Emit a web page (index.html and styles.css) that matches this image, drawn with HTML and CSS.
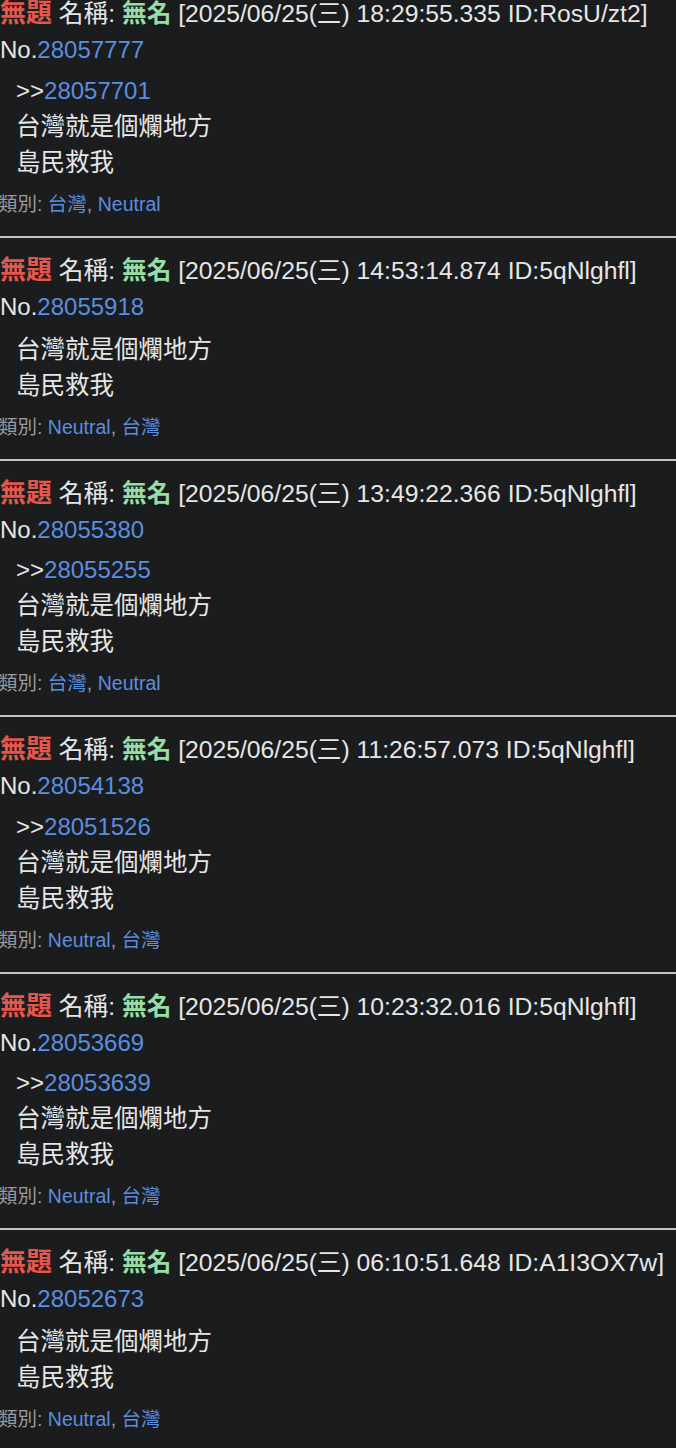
FILE: index.html
```html
<!DOCTYPE html>
<html lang="zh-Hant">
<head>
<meta charset="utf-8">
<link rel="stylesheet" href="styles.css">
</head>
<body>
<div class="thread">
  <div class="post">
    <div class="head"><span class="title">無題</span> 名稱: <span class="name">無名</span> [2025/06/25(三) 18:29:55.335 ID:RosU/zt2]</div>
    <div class="no">No.<a class="link">28057777</a></div>
    <div class="body">
      <div class="quote">&gt;&gt;<a class="link">28057701</a></div>
      <div class="line">台灣就是個爛地方</div>
      <div class="line">島民救我</div>
    </div>
    <div class="cat">類別: <a class="link">台灣</a>, <a class="link">Neutral</a></div>
  </div>
  <div class="post">
    <div class="head"><span class="title">無題</span> 名稱: <span class="name">無名</span> [2025/06/25(三) 14:53:14.874 ID:5qNlghfl]</div>
    <div class="no">No.<a class="link">28055918</a></div>
    <div class="body noquote">
      <div class="line">台灣就是個爛地方</div>
      <div class="line">島民救我</div>
    </div>
    <div class="cat">類別: <a class="link">Neutral</a>, <a class="link">台灣</a></div>
  </div>
  <div class="post">
    <div class="head"><span class="title">無題</span> 名稱: <span class="name">無名</span> [2025/06/25(三) 13:49:22.366 ID:5qNlghfl]</div>
    <div class="no">No.<a class="link">28055380</a></div>
    <div class="body">
      <div class="quote">&gt;&gt;<a class="link">28055255</a></div>
      <div class="line">台灣就是個爛地方</div>
      <div class="line">島民救我</div>
    </div>
    <div class="cat">類別: <a class="link">台灣</a>, <a class="link">Neutral</a></div>
  </div>
  <div class="post">
    <div class="head"><span class="title">無題</span> 名稱: <span class="name">無名</span> [2025/06/25(三) 11:26:57.073 ID:5qNlghfl]</div>
    <div class="no">No.<a class="link">28054138</a></div>
    <div class="body">
      <div class="quote">&gt;&gt;<a class="link">28051526</a></div>
      <div class="line">台灣就是個爛地方</div>
      <div class="line">島民救我</div>
    </div>
    <div class="cat">類別: <a class="link">Neutral</a>, <a class="link">台灣</a></div>
  </div>
  <div class="post">
    <div class="head"><span class="title">無題</span> 名稱: <span class="name">無名</span> [2025/06/25(三) 10:23:32.016 ID:5qNlghfl]</div>
    <div class="no">No.<a class="link">28053669</a></div>
    <div class="body">
      <div class="quote">&gt;&gt;<a class="link">28053639</a></div>
      <div class="line">台灣就是個爛地方</div>
      <div class="line">島民救我</div>
    </div>
    <div class="cat">類別: <a class="link">Neutral</a>, <a class="link">台灣</a></div>
  </div>
  <div class="post">
    <div class="head"><span class="title">無題</span> 名稱: <span class="name">無名</span> [2025/06/25(三) 06:10:51.648 ID:A1I3OX7w]</div>
    <div class="no">No.<a class="link">28052673</a></div>
    <div class="body noquote">
      <div class="line">台灣就是個爛地方</div>
      <div class="line">島民救我</div>
    </div>
    <div class="cat">類別: <a class="link">Neutral</a>, <a class="link">台灣</a></div>
  </div>
</div>
</body>
</html>
```
FILE: styles.css
```css
html, body {
  margin: 0;
  padding: 0;
  background: #1b1c1e;
}
body {
  font-family: "Liberation Sans", Arial, "Noto Sans CJK TC", sans-serif;
  color: #e6e6e6;
  overflow: hidden;
}
.thread {
  margin-top: -21px;
}
.post {
  padding: 14px 0 18px 0;
  border-top: 2px solid #c4c4c4;
  white-space: nowrap;
}
.post:first-child {
  border-top-color: transparent;
}
.head, .no, .quote, .line {
  font-size: 24px;
  line-height: 36px;
}
.head {
  font-size: 24.7px;
}
.title {
  color: #e2584c;
  font-weight: bold;
  font-size: 26px;
}
.name {
  color: #96dea6;
  font-weight: bold;
}
.link {
  color: #5a8ee0;
  text-decoration: none;
}
.body {
  padding-left: 16px;
  margin-top: 4.5px;
}
.body .line {
  font-size: 24.5px;
}
.body.noquote {
  margin-top: 7px;
}
.cat {
  margin-top: 9px;
  margin-left: -2px;
  font-size: 19.5px;
  line-height: 28px;
  color: #9a9a9a;
}
```
